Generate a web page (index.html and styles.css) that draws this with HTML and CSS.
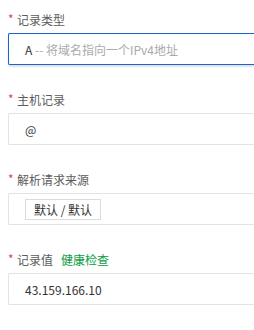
FILE: index.html
```html
<!DOCTYPE html>
<html lang="zh-CN">
<head>
  <meta charset="UTF-8" />
  <title>添加记录</title>
  <link rel="stylesheet" href="styles.css">
</head>
<body>
  <div class="form">
    <!-- 记录类型 -->
    <div class="item">
      <div class="label"><span class="req">*</span>记录类型</div>
      <div class="input focused">
        <span class="val">A</span><span class="hint">&nbsp;-- 将域名指向一个IPv4地址</span>
      </div>
    </div>

    <!-- 主机记录 -->
    <div class="item">
      <div class="label"><span class="req">*</span>主机记录</div>
      <div class="input"><span class="val">@</span></div>
    </div>

    <!-- 解析请求来源 -->
    <div class="item">
      <div class="label"><span class="req">*</span>解析请求来源</div>
      <div class="input"><span class="tag">默认 / 默认</span></div>
    </div>

    <!-- 记录值 -->
    <div class="item">
      <div class="label"><span class="req">*</span>记录值<a class="link" href="#">健康检查</a></div>
      <div class="input"><span class="val">43.159.166.10</span></div>
    </div>
  </div>
</body>
</html>
```

FILE: styles.css
```css
body {
  margin: 0;
  padding: 0;
  background: #fff;
  font-family: "Noto Sans CJK SC", "Noto Sans", sans-serif;
  font-size: 12px;
  color: #333;
  overflow: hidden;
}
.form {
  padding: 8px 0 0 8px;
}
.item {
  margin-bottom: 23px;
}
.label {
  display: flex;
  align-items: center;
  height: 22px;
  margin-bottom: 3px;
  color: #5c5c5c;
  font-size: 12px;
}
.req {
  color: #e54545;
  width: 9px;
  margin-top: -2px;
}
.link {
  color: #0b9e3f;
  text-decoration: none;
  margin-left: 8px;
}
.input {
  display: flex;
  align-items: center;
  box-sizing: border-box;
  height: 32px;
  padding: 0 16px;
  border: 1px solid #e3e3e3;
  border-right: none;
  border-radius: 2px 0 0 2px;
}
.input.focused {
  border-color: #1664cc;
  box-shadow: 0 2px 2px rgba(0,0,0,0.12);
}
.val {
  color: #333;
}
.hint {
  color: #aaa;
}
.tag {
  display: inline-block;
  box-sizing: border-box;
  height: 21px;
  line-height: 19px;
  padding: 0 8px;
  border: 1px solid #dcdcdc;
  color: #333;
}
```
